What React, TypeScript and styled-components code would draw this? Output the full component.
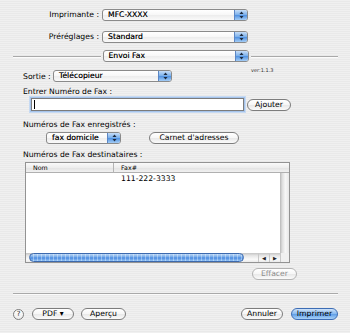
import React from 'react';
import styled, { createGlobalStyle } from 'styled-components';

const Global = createGlobalStyle`
  html, body { margin:0; padding:0; }
  body {
    background: repeating-linear-gradient(to bottom, #f0f0f0 0px, #f0f0f0 1px, #e9e9e9 1px, #e9e9e9 2px);
    font-family: "DejaVu Sans", "Lucida Grande", sans-serif;
    font-size: 7.7px;
    color: #000;
  }
`;

const Window = styled.div`
  width:350px;
  height:333px;
  box-sizing:border-box;
  padding-top:9px;
  display:flex;
  flex-direction:column;
`;

const TopGrid = styled.div`
  display:grid;
  grid-template-columns:99px 146px;
  column-gap:3px;
  row-gap:10px;
`;

const RightLabel = styled.div`
  text-align:right;
  line-height:12px;
  white-space:nowrap;
`;

const Popup = styled.div<{ $w: number }>`
  width:${p => p.$w}px;
  height:12px;
  box-sizing:border-box;
  display:flex;
  align-items:stretch;
  border:1px solid #8a8a8a;
  border-radius:3px;
  background:linear-gradient(#ffffff, #f7f7f7 50%, #ececec 51%, #fafafa);
  overflow:hidden;
`;

const PopupText = styled.span`
  flex:1;
  padding-left:5px;
  line-height:10px;
  white-space:nowrap;
  text-shadow:0 0 0.4px rgba(0,0,0,0.6);
`;

const Stepper = styled.span`
  width:12px;
  border-left:1px solid #5b86c4;
  background:linear-gradient(#c7def8, #78aeea 50%, #4d8fe0 51%, #a4cdf6);
  display:flex;
  align-items:center;
  justify-content:center;
`;

const Arrows = () => (
  <svg width="5" height="8" viewBox="0 0 5 8">
    <path d="M2.5 0.5 L4.5 3 L0.5 3 Z" fill="#1d2a3d" />
    <path d="M2.5 7.5 L4.5 5 L0.5 5 Z" fill="#1d2a3d" />
  </svg>
);

const SelectBox: React.FC<{ w: number; value: string }> = ({ w, value }) => (
  <Popup $w={w}>
    <PopupText>{value}</PopupText>
    <Stepper><Arrows /></Stepper>
  </Popup>
);

const PaneRow = styled.div`
  margin-top:7px;
  padding:0 12px 0 13px;
  display:flex;
  align-items:center;
  gap:2px;
`;

const Rule = styled.div`
  flex:1;
  height:1px;
  background:#a9a9a9;
  box-shadow:0 1px 0 #fbfbfb;
`;

const Body = styled.div`
  padding-left:23px;
  display:flex;
  flex-direction:column;
`;

const Row = styled.div<{ $mt: number }>`
  margin-top:${p => p.$mt}px;
  display:flex;
  align-items:center;
`;

const Label = styled.div<{ $mt: number }>`
  margin-top:${p => p.$mt}px;
  line-height:10px;
  height:10px;
  white-space:nowrap;
`;

const InlineLabel = styled.span`
  width:30px;
  white-space:nowrap;
`;

const Version = styled.span`
  align-self:flex-start;
  margin-top:-3px;
  margin-left:79px;
  font-size:5px;
  color:#333;
`;

const Field = styled.div`
  margin-left:8px;
  width:213px;
  height:13px;
  box-sizing:border-box;
  background:#fff;
  border:1px solid #7b7b7b;
  box-shadow:0 0 0 1px #a5c3ea, 0 0 0 2px #c6daf3;
  display:flex;
  align-items:center;
  padding-left:2px;
`;

const Caret = styled.span`
  width:1px;
  height:9px;
  background:#000;
`;

const Capsule = styled.button<{ $w: number; $ml?: number; $primary?: boolean }>`
  width:${p => p.$w}px;
  height:12px;
  margin-left:${p => p.$ml ?? 0}px;
  box-sizing:border-box;
  padding:0;
  border:1px solid ${p => (p.$primary ? '#3d6db5' : '#7d7d7d')};
  border-radius:6px;
  background:${p =>
    p.$primary
      ? 'linear-gradient(#cfe3fa, #85b8ef 50%, #5d9ce6 51%, #a9d2f8)'
      : 'linear-gradient(#ffffff, #f6f6f6 50%, #e8e8e8 51%, #fbfbfb)'};
  font:inherit;
  color:#000;
  line-height:10px;
  white-space:nowrap;
  &:disabled {
    color:#8d8d8d;
    border-color:#b3b3b3;
  }
`;

const Indent = styled.span<{ $w: number }>`
  width:${p => p.$w}px;
  flex:none;
`;

const Table = styled.div`
  margin-top:2px;
  margin-left:2px;
  width:265px;
  height:101px;
  box-sizing:border-box;
  border:1px solid #939393;
  background:#fff;
  display:grid;
  grid-template-columns:88px 166px 9px;
  grid-template-rows:10px 1fr 9px;
`;

const HeadCell = styled.div<{ $span?: number; $divider?: boolean }>`
  grid-column:span ${p => p.$span ?? 1};
  box-sizing:border-box;
  padding-left:7px;
  border-bottom:1px solid #b0b0b0;
  border-right:${p => (p.$divider ? '1px solid #b4b4b4' : 'none')};
  background:linear-gradient(#fafafa, #eeeeee 50%, #e2e2e2 51%, #f1f1f1);
  font-size:6.3px;
  line-height:9px;
`;

const Cell = styled.div`
  padding-left:7px;
  height:12px;
  line-height:12px;
  white-space:nowrap;
`;

const VScroll = styled.div`
  background:linear-gradient(to right, #b9b9b9, #dedede 25%, #f7f7f7 60%, #e8e8e8);
`;

const HScroll = styled.div`
  grid-column:span 2;
  display:flex;
  align-items:stretch;
  background:linear-gradient(#c4c4c4, #e6e6e6 30%, #fafafa 70%, #eaeaea);
`;

const Thumb = styled.div`
  margin-left:3px;
  width:215px;
  box-sizing:border-box;
  border:1px solid #3c69ad;
  border-radius:5px;
  background:
    repeating-linear-gradient(to right, transparent 0 3px, rgba(255,255,255,0.35) 3px 4px),
    linear-gradient(#bcd8f7, #6fa6e8 45%, #4a8ae0 55%, #94c4f5);
`;

const Track = styled.div`
  flex:1;
`;

const ArrowBtn = styled.div`
  width:10px;
  border-left:1px solid #c8c8c8;
  display:flex;
  align-items:center;
  justify-content:center;
  font-size:5px;
  color:#222;
`;

const Corner = styled.div`
  background:#f0f0f0;
  border-left:1px solid #c8c8c8;
`;

const EraseRow = styled.div`
  margin-top:5px;
  width:274px;
  display:flex;
  justify-content:flex-end;
`;

const BottomRule = styled.div`
  margin:13px 12px 0 13px;
  height:1px;
  background:#a9a9a9;
  box-shadow:0 1px 0 #fbfbfb;
`;

const Footer = styled.div`
  margin-top:14px;
  padding:0 12px 0 13px;
  display:flex;
  align-items:center;
`;

const Help = styled.button`
  width:11px;
  height:11px;
  padding:0;
  box-sizing:border-box;
  border:1px solid #7d7d7d;
  border-radius:50%;
  background:linear-gradient(#ffffff, #ececec);
  font:inherit;
  font-size:7px;
  line-height:9px;
  color:#222;
`;

const Spacer = styled.div`
  flex:1;
`;

const App: React.FC = () => {
  return (
    <Window>
      <Global />
      <TopGrid>
        <RightLabel>Imprimante :</RightLabel>
        <SelectBox w={146} value="MFC-XXXX" />
        <RightLabel>Préréglages :</RightLabel>
        <SelectBox w={146} value="Standard" />
      </TopGrid>
      <PaneRow>
        <Rule />
        <SelectBox w={146} value="Envoi Fax" />
        <Rule />
      </PaneRow>
      <Body>
        <Row $mt={8}>
          <InlineLabel>Sortie :</InlineLabel>
          <SelectBox w={119} value="Télécopieur" />
          <Version>ver:1.1.3</Version>
        </Row>
        <Label $mt={5}>Entrer Numéro de Fax :</Label>
        <Row $mt={1}>
          <Field><Caret /></Field>
          <Capsule $w={44} $ml={3}>Ajouter</Capsule>
        </Row>
        <Label $mt={9}>Numéros de Fax enregistrés :</Label>
        <Row $mt={2}>
          <Indent $w={23} />
          <SelectBox w={75} value="fax domicile" />
          <Capsule $w={90} $ml={28}>Carnet d'adresses</Capsule>
        </Row>
        <Label $mt={6}>Numéros de Fax destinataires :</Label>
        <Table>
          <HeadCell $divider>Nom</HeadCell>
          <HeadCell $span={2}>Fax#</HeadCell>
          <div>
            <Cell />
          </div>
          <div>
            <Cell>111-222-3333</Cell>
          </div>
          <VScroll />
          <HScroll>
            <Thumb />
            <Track />
            <ArrowBtn>◀</ArrowBtn>
            <ArrowBtn>▶</ArrowBtn>
          </HScroll>
          <Corner />
        </Table>
        <EraseRow>
          <Capsule $w={45} disabled>Effacer</Capsule>
        </EraseRow>
      </Body>
      <BottomRule />
      <Footer>
        <Help>?</Help>
        <Capsule $w={42} $ml={8}>PDF ▾</Capsule>
        <Capsule $w={45} $ml={7}>Aperçu</Capsule>
        <Spacer />
        <Capsule $w={42}>Annuler</Capsule>
        <Capsule $w={47} $ml={8} $primary>Imprimer</Capsule>
      </Footer>
    </Window>
  );
};

export default App;
